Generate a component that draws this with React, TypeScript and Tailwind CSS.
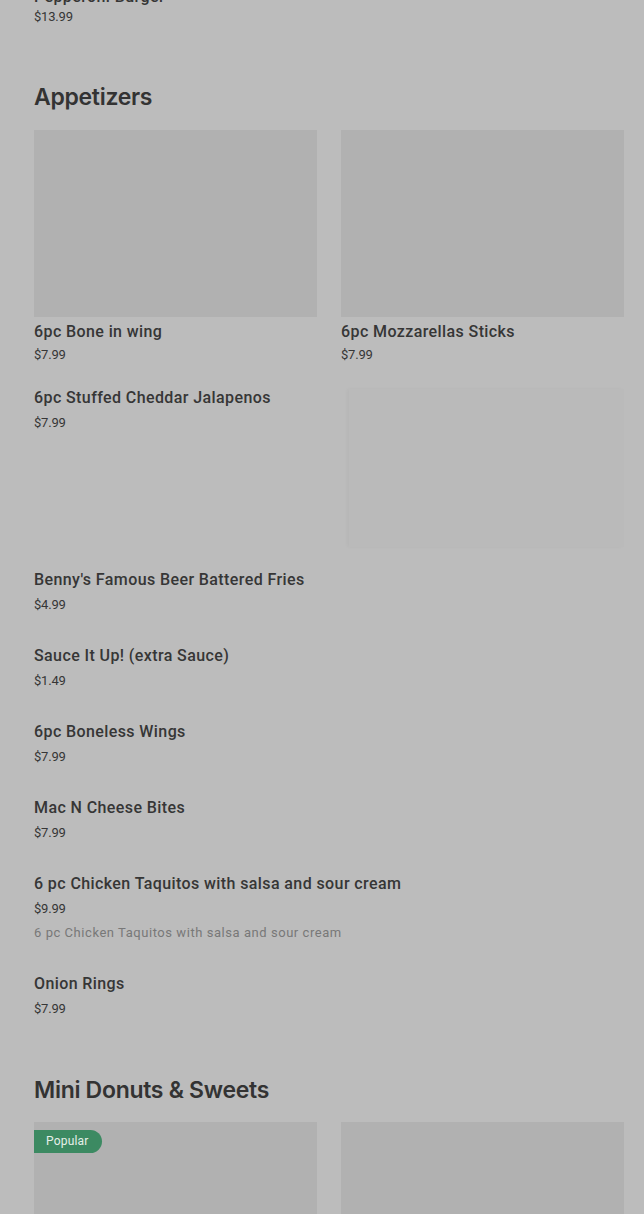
import React from 'react';

type Item = { name: string; price: string; desc?: string };

const gridItems: Item[] = [
    { name: '6pc Bone in wing', price: '$7.99' },
    { name: '6pc Mozzarellas Sticks', price: '$7.99' },
];

const listItems: Item[] = [
    { name: "Benny's Famous Beer Battered Fries", price: '$4.99' },
    { name: 'Sauce It Up! (extra Sauce)', price: '$1.49' },
    { name: '6pc Boneless Wings', price: '$7.99' },
    { name: 'Mac N Cheese Bites', price: '$7.99' },
    {
        name: '6 pc Chicken Taquitos with salsa and sour cream',
        price: '$9.99',
        desc: '6 pc Chicken Taquitos with salsa and sour cream',
    },
    { name: 'Onion Rings', price: '$7.99' },
];

const titleCls = 'text-[16px] leading-[20px] font-medium tracking-[0.4px] text-[#363636]';
const priceCls = 'text-[13px] leading-[18px] tracking-[-0.2px] text-[#363636]';

const GridCard = ({ item, popular }: { item?: Item; popular?: boolean }) => (
    <div className="flex flex-col">
        <div className="relative h-[187px] bg-[#b1b1b1]">
            {popular && (
                <span className="absolute left-0 top-2 h-[23px] pl-3 pr-[13px] rounded-r-full bg-[#3c8a62] text-[12px] leading-[23px] tracking-[0.2px] text-[#e6efe9]">
                    Popular
                </span>
            )}
        </div>
        {item && (
            <>
                <p className={`mt-[5px] ${titleCls}`}>{item.name}</p>
                <p className={`mt-[4px] ${priceCls}`}>{item.price}</p>
            </>
        )}
    </div>
);

const ListRow = ({ item }: { item: Item }) => (
    <div className="pb-[32px]">
        <p className={titleCls}>{item.name}</p>
        <p className={`mt-[6px] ${priceCls}`}>{item.price}</p>
        {item.desc && (
            <p className="mt-[6px] text-[13px] leading-[18px] tracking-[0.55px] text-[#787878]">{item.desc}</p>
        )}
    </div>
);

const App = () => {
    return (
        <div
            className="w-[644px] h-[1214px] overflow-hidden bg-[#bcbcbc] pl-[34px] pr-[20px]"
            style={{ fontFamily: 'Roboto, "Noto Sans", sans-serif' }}
        >
            <div className="-mt-[13px]">
                <p className={titleCls}>Pepperoni Burger</p>
                <p className={`mt-[1px] ${priceCls}`}>$13.99</p>
            </div>

            <h2
                className="mt-[57px] text-[23px] leading-[28px] font-semibold tracking-[-0.3px] text-[#333]"
                style={{ fontFamily: 'Inter, sans-serif' }}
            >
                Appetizers
            </h2>

            <div className="mt-[19px] grid grid-cols-2 gap-x-[24px]">
                {gridItems.map((it) => (
                    <GridCard key={it.name} item={it} />
                ))}
            </div>

            <div className="mt-[24px] flex gap-[35px] pb-[23px]">
                <div className="flex-1">
                    <p className={titleCls}>6pc Stuffed Cheddar Jalapenos</p>
                    <p className={`mt-[6px] ${priceCls}`}>$7.99</p>
                </div>
                <div className="w-[275px] h-[158px] mt-[1px] bg-[#bababa] shadow-[-2px_0_3px_rgba(0,0,0,0.03)]" />
            </div>

            {listItems.map((it) => (
                <ListRow key={it.name} item={it} />
            ))}

            <h2
                className="mt-[26px] text-[23px] leading-[28px] font-semibold tracking-[-0.3px] text-[#333]"
                style={{ fontFamily: 'Inter, sans-serif' }}
            >
                Mini Donuts &amp; Sweets
            </h2>

            <div className="mt-[18px] grid grid-cols-2 gap-x-[24px]">
                <GridCard popular />
                <GridCard />
            </div>
        </div>
    );
};

export default App;
